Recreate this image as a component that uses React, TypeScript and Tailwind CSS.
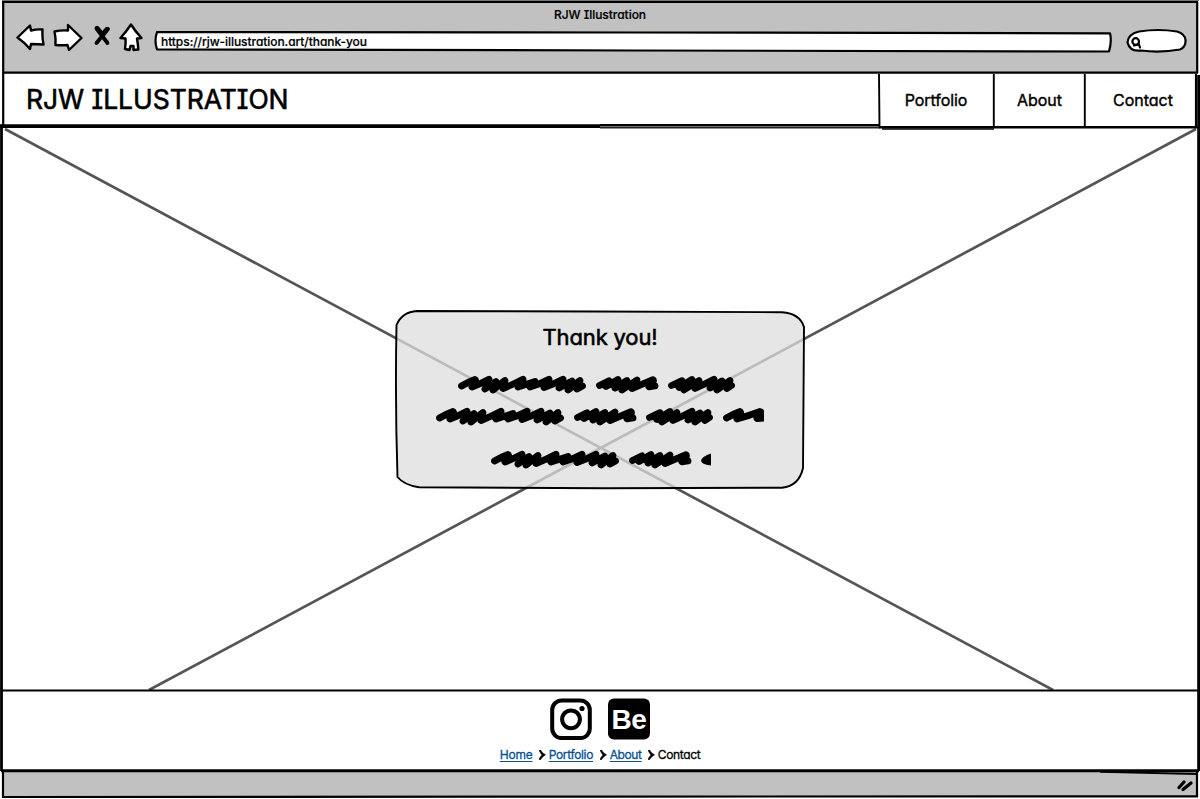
import React from "react";

const LONG = "M3.500 14Q10 10 17 7.500Q19 8 14 15Q22 12 31 7.200Q32 9 27 17L38 9.500L35 18L47 8.500L45 16.500Q56 12 65 7.200Q66 9 60 15L77 9.500L72 15Q82 12 91 7.200Q92 9 86 15.500Q96 12 105 7.200L101 16L114 9L110 18L122 8.500L119 17L124.500 14M31 13H46M102 12.500H122";
const SHORT = "M3.500 13.500L13 8.700L10 14.500L22 7.500L19 16L31 8.500L26 18L41 8L36 16.500Q47 12 57 7.700Q59 8.500 53 14.800L59 14M8 12.500H38";
const MID = "M3.500 13.500L14 8.700L11 15.500L24 7.500L16 18L31 8.500L27 16.500Q37 12 46 7.200L42 16L54 9L49 18L62 8.500L59 16.500L63.500 13.500M8 12.500H30M42 13H62";
const TAIL = "M3.500 14Q10 10 17 7.500Q19 8 14 15Q25 12 37 7.500Q40 8 34 14.500L44 14M37 10.500H44";

function Scribble({ width, clipId, tail = MID }: { width: number; clipId: string; tail?: string }) {
  return (
    <svg className="block" width={width} height="24" viewBox={`0 0 ${width} 24`} fill="none" stroke="#000" strokeWidth="6.800" strokeLinecap="round" strokeLinejoin="round" aria-hidden="true">
      <clipPath id={clipId}><rect width={width} height="24" /></clipPath>
      <g clipPath={`url(#${clipId})`}>
        <path d={LONG} />
        <path d={SHORT} transform="translate(138 0)" />
        <path d={MID} transform="translate(210 0)" />
        <path d={tail} transform="translate(287 0)" />
      </g>
    </svg>
  );
}

function LastScribble() {
  return (
    <svg className="block" width="220" height="24" viewBox="0 0 220 24" fill="none" stroke="#000" strokeWidth="6.800" strokeLinecap="round" strokeLinejoin="round" aria-hidden="true">
      <path d={LONG} />
      <path d={SHORT} transform="translate(138 0)" />
      <path d="M220 6.500Q211 9.500 210 13.500Q210 17.500 220 18.500Z" fill="#000" stroke="none" />
    </svg>
  );
}

function FrameLines() {
  return (
    <svg className="pointer-events-none absolute inset-0" width="1200" height="799" fill="none" stroke="#000" strokeWidth="2.200" aria-hidden="true">
      <path d="M2 .5H1199" stroke="#70756f" strokeWidth="1" />
      <path d="M2 2H1198M3.200 1V126M1197.200 2V73M3 72.700H1198" />
      <path d="M0 126.200H600" strokeWidth="3.800" />
      <path d="M600 125.200H880" />
      <path d="M600 127.500H880" stroke="#222" strokeWidth="2" />
      <path d="M879 127.200H1198" strokeWidth="2.600" />
      <path d="M882 129H994" strokeWidth="1.400" />
      <path d="M879 74L879.500 127M993.800 74V127M1084.800 74V127" strokeWidth="1.900" />
      <path d="M1196 74V127" />
      <path d="M1198.600 75V771" strokeWidth="2.800" />
      <path d="M1.500 125V771" strokeWidth="2.800" />
      <path d="M1 690.500H1198" />
      <path d="M1 770.800H1199" strokeWidth="3" />
      <path d="M3 771V797L600 796.600L1197 796.300V772" />
      <path d="M1100 771.800L1197 774" strokeWidth="1.800" />
    </svg>
  );
}

function Chevron() {
  return (
    <svg className="block" width="7" height="10" viewBox="0 0 7 10" aria-hidden="true">
      <path d="M0 .2L1.500 0Q3 3 6.500 4.800Q3.500 6.500 1.200 10L0 9.300Q1.500 6.500 3 5Q1.500 3.200 0 .2Z" stroke="#000" strokeWidth=".6" />
    </svg>
  );
}

export default function App() {
  return (
    <div className="relative flex h-[799px] w-[1200px] flex-col overflow-hidden bg-white font-['Inter',sans-serif] text-black [font-feature-settings:'cv11','cv08']">
      <header className="ml-[3px] flex h-[73px] w-[1194px] shrink-0 flex-col bg-[#c1c1c1]">
        <div className="flex h-[28px] items-center justify-center pt-px text-[12px] font-medium tracking-[-0.03px] [-webkit-text-stroke:0.2px_#000]">RJW Illustration</div>
        <div className="flex h-[26px] items-center pl-[13px]">
          <svg className="-mt-[8px] shrink-0" width="128" height="30" viewBox="0 0 128 30" fill="#fff" stroke="#000" strokeWidth="2.400" strokeLinejoin="round" strokeLinecap="round" aria-hidden="true">
            <path d="M1.500 15.500L14 3.500L15 8.500Q21 7 26.500 7.500Q26 15 27.500 22.500Q21 22 15 22L14 27Q8 20 1.500 15.500Z" />
            <path d="M38.500 9.500Q45 8 52 8.500L52 3L65.500 16L53 28L51.500 23Q45 23.500 39.500 23Q40 16 38.500 9.500Z" />
            <path d="M80.500 6.500L91.500 21M92 7L80.500 21" strokeWidth="3.800" />
            <path d="M81 6L87 13M91 7L86 13" strokeWidth="4.400" />
            <path d="M115 2.500Q119 9 125.500 16L121 16.500Q122 22 122.300 27.500L117.500 28V24H114.500L113.500 28L109 27Q110 21 109.500 16.500L104.500 16Q110 10 115 2.500Z" />
          </svg>
          <div className="relative ml-[10px] flex h-[22px] w-[959px] shrink-0 items-center pt-px pl-[7px] text-[12px] font-medium tracking-[-0.06px] [-webkit-text-stroke:0.2px_#000]">
            <svg className="absolute inset-0" width="959" height="23" fill="#fff" stroke="#000" strokeWidth="2.200" strokeLinejoin="round" aria-hidden="true">
              <path d="M3 2L480 2.500L956 3.300Q958 11 955 21.500L480 20.500L3 19.300Q0 11 3 2Z" />
            </svg>
            <span className="relative">https://rjw-illustration.art/thank-you</span>
          </div>
          <svg className="ml-[13px] shrink-0" width="62" height="26" viewBox="0 0 62 26" fill="#fff" stroke="#000" strokeWidth="2.200" aria-hidden="true">
            <path d="M13 3.500Q32 .5 51 3.500Q59 6 59.500 12Q60 19 54 21.500Q34 25 15 22.500Q4 24 1.500 14.500Q2 6 13 3.500Z" />
            <circle cx="9.700" cy="13.500" r="3.300" />
            <path d="M8 17.500L13 16.500L14 19.500" strokeLinecap="round" fill="none" />
          </svg>
        </div>
      </header>
      <nav className="flex h-[53px] shrink-0 items-center">
        <h1 className="ml-[26px] w-[853px] text-[26.500px] leading-none tracking-[-0.05px] [-webkit-text-stroke:0.6px_#000]">RJW ILLUSTRATION</h1>
        <a className="w-[114px] text-center text-[16px] tracking-[-0.07px] [-webkit-text-stroke:0.4px_#000]">Portfolio</a>
        <a className="w-[93px] text-center text-[16px] [-webkit-text-stroke:0.4px_#000]">About</a>
        <a className="w-[114px] text-center text-[16px] [-webkit-text-stroke:0.4px_#000]">Contact</a>
      </nav>
      <main className="relative flex h-[564px] shrink-0 items-center justify-center">
        <svg className="absolute inset-0" width="1200" height="564" stroke="#555" strokeWidth="2.700" aria-hidden="true">
          <path d="M5 3L1053 564M1196 3L149 564" />
        </svg>
        <section className="relative mt-[-17px] flex h-[180px] w-[410px] flex-col items-center">
          <svg className="absolute inset-0" width="410" height="180" stroke="#000" strokeWidth="1.900" aria-hidden="true">
            <path d="M22 1L200 1.500L387 2.200Q405 3.500 409 17L408 158Q404 176 387 177.700L210 178.300L24 177.300Q9 175 2.500 167Q0 90 1.500 15Q7 2 22 1Z" fill="#dedede" fillOpacity=".75" />
          </svg>
          <h2 className="relative mt-[14px] text-[22px] leading-[26px] tracking-[-0.15px] [-webkit-text-stroke:0.6px_#000]">Thank you!</h2>
          <div className="relative mt-[22px] mr-[7px]"><Scribble width={278} clipId="line-one" /></div>
          <div className="relative mt-[8px]"><Scribble width={328} clipId="line-two" tail={TAIL} /></div>
          <div className="relative mt-[19px] ml-[2px]"><LastScribble /></div>
        </section>
      </main>
      <footer className="flex h-[81px] shrink-0 flex-col items-center">
        <div className="mt-[8px] flex gap-[16px]">
          <svg width="42" height="42" viewBox="0 0 42 42" fill="none" stroke="#000" strokeWidth="4" aria-label="Instagram">
            <rect x="2.200" y="2.500" width="37.600" height="37.600" rx="9.500" /><circle cx="21" cy="21.300" r="8.900" />
            <circle cx="32" cy="10.500" r="2.600" fill="#000" stroke="none" />
          </svg>
          <div className="flex h-[41px] w-[42px] translate-y-[0.500px] items-center justify-center rounded-[6px] bg-black pt-px font-['Liberation_Sans',sans-serif] text-[28px] font-bold tracking-[-0.5px] text-white">Be</div>
        </div>
        <div className="mt-[6px] flex h-[18px] items-center text-[12px] whitespace-nowrap [-webkit-text-stroke:0.3px_currentColor]">
          <a className="w-[39px] tracking-[-0.2px] text-[#085192] underline underline-offset-2">Home</a><Chevron />
          <a className="ml-[3px] w-[51px] tracking-[-0.35px] text-[#085192] underline underline-offset-2">Portfolio</a><Chevron />
          <a className="ml-[3px] w-[38px] tracking-[-0.4px] text-[#085192] underline underline-offset-2">About</a><Chevron />
          <span className="ml-[3px] tracking-[-0.35px]">Contact</span>
        </div>
      </footer>
      <div className="ml-[3px] flex h-[25px] w-[1193px] shrink-0 items-center justify-end bg-[#c1c1c1] pt-[2px] pr-[2px]">
        <svg width="18" height="14" stroke="#000" strokeWidth="3.300" strokeLinecap="round" aria-hidden="true">
          <path d="M3 9.500L8 4M7 11.500L15 5" />
        </svg>
      </div>
      <FrameLines />
    </div>
  );
}
